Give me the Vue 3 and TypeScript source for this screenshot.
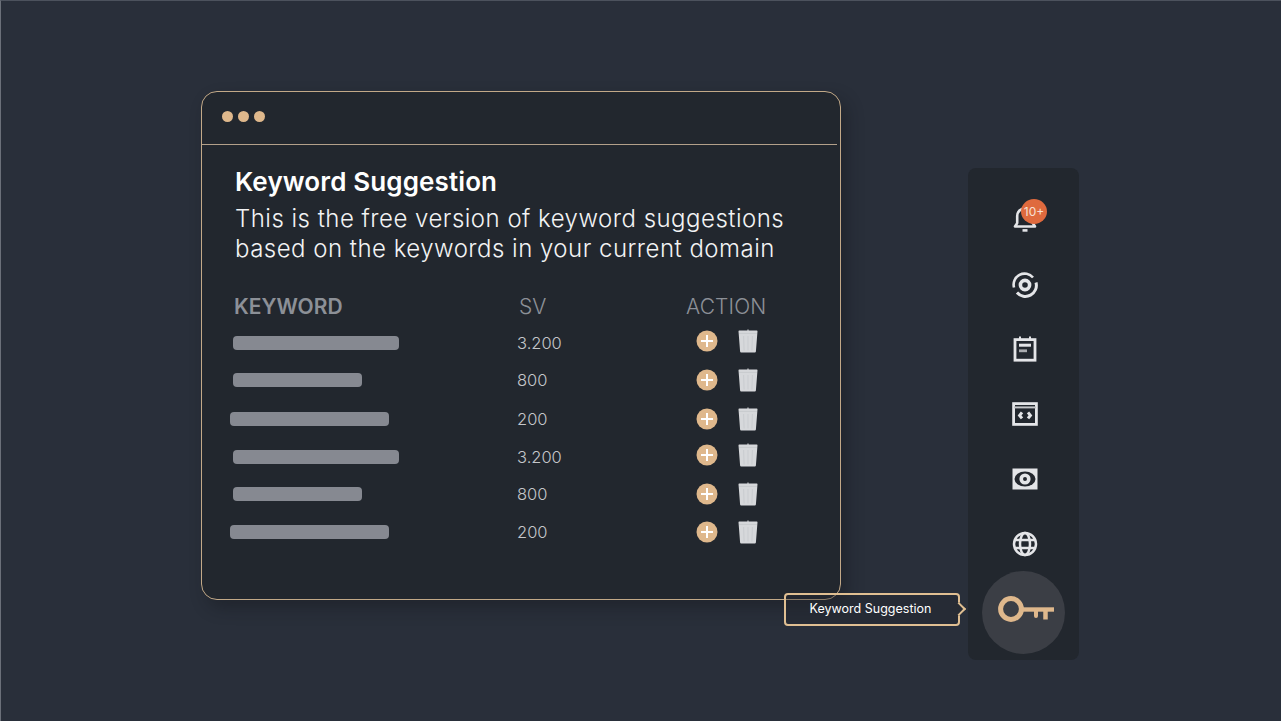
<script setup lang="ts">
const rows = [
  { id: 1, width: 166, indent: 3, sv: '3.200', height: 37, lift: 4 },
  { id: 2, width: 129, indent: 3, sv: '800', height: 38, lift: 1 },
  { id: 3, width: 159, indent: 0, sv: '200', height: 39, lift: 0 },
  { id: 4, width: 166, indent: 3, sv: '3.200', height: 37, lift: 4 },
  { id: 5, width: 129, indent: 3, sv: '800', height: 38, lift: 1 },
  { id: 6, width: 159, indent: 0, sv: '200', height: 38, lift: 0 },
]
</script>

<template>
  <div class="page">
    <section class="card">
      <header class="card-top">
        <span class="dot"></span>
        <span class="dot"></span>
        <span class="dot"></span>
      </header>
      <div class="card-body">
        <h1 class="title">Keyword Suggestion</h1>
        <p class="desc">This is the free version of keyword suggestions<br />based on the keywords in your current domain</p>
        <div class="thead">
          <span class="th-keyword">KEYWORD</span>
          <span class="th-sv">SV</span>
          <span class="th-action">ACTION</span>
        </div>
        <div
          v-for="row in rows"
          :key="row.id"
          class="row"
          :style="{ height: row.height + 'px' }"
        >
          <div class="cell-bar">
            <span class="bar" :style="{ width: row.width + 'px', marginLeft: row.indent + 'px' }"></span>
          </div>
          <span class="cell-sv">{{ row.sv }}</span>
          <div class="cell-action" :style="{ marginBottom: row.lift + 'px' }">
            <svg class="plus" viewBox="0 0 22 22" width="22" height="22">
              <circle cx="11" cy="11" r="10.5" fill="#dfb88c" />
              <path d="M11 5v12M5 11h12" stroke="#fff" stroke-width="2" fill="none" />
            </svg>
            <svg class="trash" viewBox="0 0 20 24" width="20" height="24">
              <path d="M9.4 0.4h1.2v1.6h-1.2z" fill="#d2d4d7" />
              <path d="M1.2 1.6h17.6q.7 0 .7.7l-.2 2.4-1.4 17.9q-.1.9-1 .9H3.1q-.9 0-1-.9L.7 4.7.5 2.3q0-.7.7-.7z" fill="#d6d8db" />
              <path d="M1 4.4h18" stroke="#c2c5c9" stroke-width=".7" fill="none" />
              <path d="M5.6 7l.5 14.5M10 7v14.5M14.4 7l-.5 14.5" stroke="#c9ccd0" stroke-width="1" fill="none" />
            </svg>
          </div>
        </div>
      </div>
    </section>

    <aside class="rail">
      <div class="rail-item">
        <div class="bell-wrap">
          <svg viewBox="0 0 24 28" width="24" height="28" fill="none" stroke="#e4e5e8" stroke-width="2.6">
            <path d="M2 21.5h20l-2.2-3.4V11a7.8 7.8 0 0 0-15.6 0v7.1z" stroke-linejoin="round" />
            <path d="M9.5 25.4h5" />
          </svg>
          <span class="badge">10+</span>
        </div>
      </div>
      <div class="rail-item">
        <svg class="sync" viewBox="0 0 26 26" width="26" height="26" fill="none" stroke="#e4e5e8" stroke-width="2.6">
          <path d="M2 15.5A11 11 0 0 1 21 5.5" />
          <path d="M24 10.5A11 11 0 0 1 5 20.5" stroke-width="3" />
          <circle cx="13" cy="13" r="4.6" stroke-width="3.6" />
        </svg>
      </div>
      <div class="rail-item">
        <svg viewBox="0 0 24 26" width="24" height="26" fill="none" stroke="#e4e5e8" stroke-width="2.8">
          <rect x="2" y="3.6" width="20" height="20.6" />
          <path d="M7 0.5v3M17 0.5v3" stroke-width="2" />
          <path d="M6 9.2h12" stroke-width="3" />
          <path d="M6 14.8h8" stroke-width="2.8" stroke="#a9abaf" />
        </svg>
      </div>
      <div class="rail-item">
        <svg viewBox="0 0 26 24" width="26" height="24" fill="none" stroke="#e4e5e8" stroke-width="2.8">
          <rect x="1.6" y="1.6" width="22.8" height="20.8" />
          <path d="M2 5.4h22" stroke="#c4c6c9" stroke-width="2" />
          <path d="M10 10.4l-2.4 3 2.4 3M16 10.4l2.4 3-2.4 3" stroke-width="3" />
        </svg>
      </div>
      <div class="rail-item">
        <svg viewBox="0 0 26 22" width="26" height="22" fill="none">
          <rect x="0.5" y="0.5" width="25" height="21" fill="#e4e5e8" />
          <ellipse cx="13" cy="11" rx="10.5" ry="7.5" fill="#23272e" />
          <circle cx="13" cy="11" r="3.8" stroke="#e4e5e8" stroke-width="3.6" />
        </svg>
      </div>
      <div class="rail-item">
        <svg viewBox="0 0 26 26" width="26" height="26" fill="none" stroke="#e4e5e8" stroke-width="2.5">
          <circle cx="13" cy="13" r="11" />
          <ellipse cx="13" cy="13" rx="5" ry="11" />
          <path d="M3 9h20M3 17h20" />
        </svg>
      </div>
      <div class="rail-active">
        <div class="key-disc">
          <svg class="key" viewBox="0 0 56 28" width="56" height="28" fill="none" stroke="#dfb88c">
            <circle cx="13" cy="13" r="10.4" stroke-width="5" />
            <path d="M24 13.5h32" stroke-width="4.4" />
            <path d="M38 14v6" stroke-width="4" stroke-linecap="round" />
            <path d="M47.5 14v9.5" stroke-width="4.5" />
          </svg>
        </div>
        <div class="tip">
          Keyword Suggestion
          <span class="tip-arrow"></span>
        </div>
      </div>
    </aside>
  </div>
</template>

<style>
html,
body {
  margin: 0;
  background: #292f3a;
}
</style>

<style scoped>
.page {
  box-sizing: border-box;
  width: 1281px;
  height: 721px;
  overflow: hidden;
  display: flex;
  align-items: flex-start;
  padding: 90px 0 0 200px;
  background: #292f3a;
  border-top: 1px solid #4c525d;
  border-left: 1px solid #6b7079;
  font-family: Inter, "Liberation Sans", sans-serif;
}
.card {
  box-sizing: border-box;
  width: 640px;
  height: 509px;
  background: #22272e;
  border: 1px solid #c2a988;
  border-radius: 16px;
  box-shadow: 6px 8px 16px rgba(20, 22, 28, 0.4);
}
.card-top {
  box-sizing: content-box;
  height: 48px;
  display: flex;
  align-items: center;
  gap: 5px;
  padding: 0 0 4px 20px;
  border-bottom: 1px solid #b3a08a;
  margin-right: 3px;
}
.dot {
  width: 11px;
  height: 11px;
  border-radius: 50%;
  background: #dfb88c;
}
.card-body {
  padding: 22px 0 0 28px;
}
.title {
  margin: 0 0 0 5px;
  font-size: 26px;
  line-height: 30px;
  font-weight: 600;
  letter-spacing: 0.12px;
  color: #fff;
}
.desc {
  margin: 7px 0 0 5px;
  font-size: 24px;
  line-height: 30px;
  font-weight: 300;
  letter-spacing: 0.48px;
  color: #f2f3f4;
}
.thead {
  display: flex;
  align-items: center;
  height: 30px;
  margin-top: 27px;
  margin-bottom: 3px;
  font-size: 21px;
  color: #8c9097;
}
.th-keyword {
  margin-left: 4px;
  width: 285px;
  font-weight: 600;
}
.th-sv {
  width: 167px;
  font-weight: 300;
}
.th-action {
  font-weight: 300;
  letter-spacing: 0.15px;
}
.row {
  display: flex;
  align-items: center;
}
.cell-bar {
  width: 287px;
}
.bar {
  display: block;
  height: 14px;
  border-radius: 4px;
  background: #868991;
}
.cell-sv {
  width: 179px;
  font-size: 16.5px;
  font-weight: 300;
  color: #c4c6ca;
}
.cell-action {
  display: flex;
  align-items: center;
  gap: 20px;
}
.plus,
.trash {
  display: block;
}
.rail {
  box-sizing: border-box;
  width: 111px;
  height: 492px;
  margin: 77px 0 0 127px;
  padding-top: 18px;
  background: #22272e;
  border-radius: 8px;
  display: flex;
  flex-direction: column;
  align-items: center;
}
.rail-item {
  height: 65px;
  padding-left: 3px;
  display: flex;
  align-items: center;
  justify-content: center;
  flex: none;
}
.sync {
  margin-top: 2px;
}
.bell-wrap {
  position: relative;
  width: 24px;
  height: 28px;
}
.badge {
  position: absolute;
  left: 8px;
  top: -6px;
  width: 26px;
  height: 25px;
  border-radius: 50%;
  background: #df6a3e;
  color: #f8e0d4;
  font-size: 12px;
  line-height: 25px;
  text-align: center;
}
.rail-active {
  position: relative;
  display: flex;
  justify-content: center;
  margin-top: -5px;
}
.key-disc {
  width: 83px;
  height: 83px;
  border-radius: 50%;
  background: #3b3e45;
  display: flex;
  align-items: center;
  justify-content: center;
}
.key {
  margin: 0 0 6px 5px;
}
.tip {
  position: absolute;
  right: 105px;
  top: 22px;
  box-sizing: border-box;
  width: 176px;
  height: 33px;
  padding-right: 3px;
  line-height: 28px;
  text-align: center;
  white-space: nowrap;
  font-size: 12.5px;
  color: #fff;
  background: rgba(34, 38, 46, 0.35);
  border: 2px solid #e0bf92;
  border-radius: 4px;
}
.tip-arrow {
  position: absolute;
  right: -6px;
  top: 9px;
  width: 8px;
  height: 8px;
  background: #262b34;
  border-top: 2px solid #e0bf92;
  border-right: 2px solid #e0bf92;
  transform: rotate(45deg);
}
</style>
